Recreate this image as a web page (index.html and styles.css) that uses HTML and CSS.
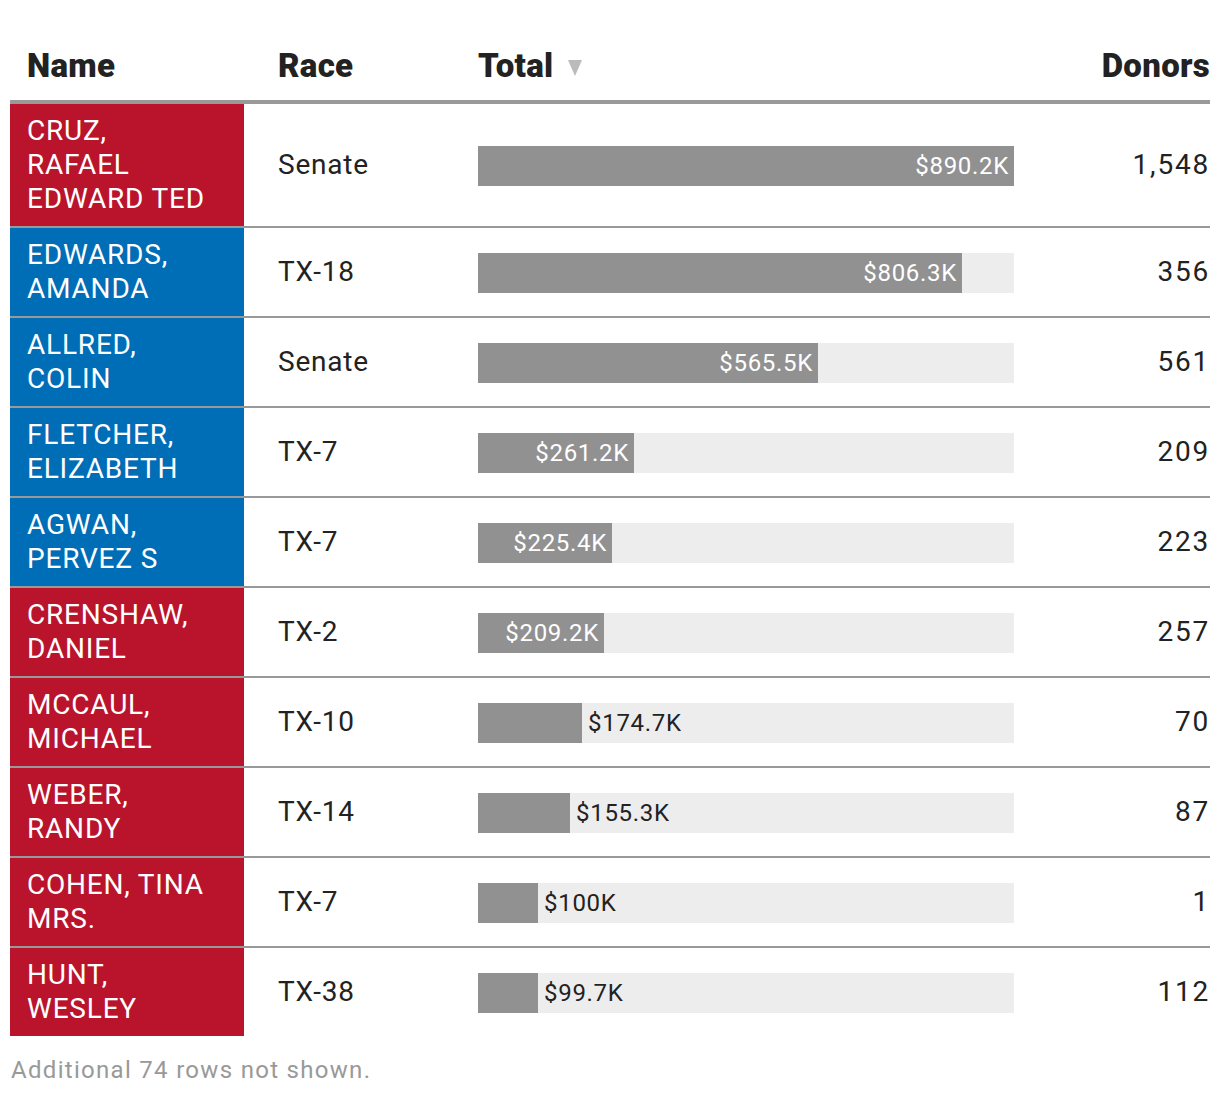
FILE: index.html
```html
<!DOCTYPE html>
<html>
<head>
<meta charset="utf-8">
<link rel="stylesheet" href="styles.css">
</head>
<body>
<div class="wrap">
  <table class="tbl">
    <thead>
      <tr>
        <th class="c-name">Name</th>
        <th class="c-race">Race</th>
        <th class="c-total">Total <span class="sort"></span></th>
        <th class="c-donors">Donors</th>
      </tr>
    </thead>
    <tbody>
      <tr>
        <td class="c-name rep">CRUZ,<br>RAFAEL<br>EDWARD TED</td>
        <td class="c-race">Senate</td>
        <td class="c-total"><div class="track"><div class="fill" style="width:536px"><span class="lab in">$890.2K</span></div></div></td>
        <td class="c-donors">1,548</td>
      </tr>
      <tr>
        <td class="c-name dem">EDWARDS,<br>AMANDA</td>
        <td class="c-race">TX-18</td>
        <td class="c-total"><div class="track"><div class="fill" style="width:484px"><span class="lab in">$806.3K</span></div></div></td>
        <td class="c-donors">356</td>
      </tr>
      <tr>
        <td class="c-name dem">ALLRED,<br>COLIN</td>
        <td class="c-race">Senate</td>
        <td class="c-total"><div class="track"><div class="fill" style="width:340px"><span class="lab in">$565.5K</span></div></div></td>
        <td class="c-donors">561</td>
      </tr>
      <tr>
        <td class="c-name dem">FLETCHER,<br>ELIZABETH</td>
        <td class="c-race">TX-7</td>
        <td class="c-total"><div class="track"><div class="fill" style="width:156px"><span class="lab in">$261.2K</span></div></div></td>
        <td class="c-donors">209</td>
      </tr>
      <tr>
        <td class="c-name dem">AGWAN,<br>PERVEZ S</td>
        <td class="c-race">TX-7</td>
        <td class="c-total"><div class="track"><div class="fill" style="width:134px"><span class="lab in">$225.4K</span></div></div></td>
        <td class="c-donors">223</td>
      </tr>
      <tr>
        <td class="c-name rep">CRENSHAW,<br>DANIEL</td>
        <td class="c-race">TX-2</td>
        <td class="c-total"><div class="track"><div class="fill" style="width:126px"><span class="lab in">$209.2K</span></div></div></td>
        <td class="c-donors">257</td>
      </tr>
      <tr>
        <td class="c-name rep">MCCAUL,<br>MICHAEL</td>
        <td class="c-race">TX-10</td>
        <td class="c-total"><div class="track"><div class="fill" style="width:104px"></div><span class="lab out">$174.7K</span></div></td>
        <td class="c-donors">70</td>
      </tr>
      <tr>
        <td class="c-name rep">WEBER,<br>RANDY</td>
        <td class="c-race">TX-14</td>
        <td class="c-total"><div class="track"><div class="fill" style="width:92px"></div><span class="lab out">$155.3K</span></div></td>
        <td class="c-donors">87</td>
      </tr>
      <tr>
        <td class="c-name rep">COHEN, TINA<br>MRS.</td>
        <td class="c-race">TX-7</td>
        <td class="c-total"><div class="track"><div class="fill" style="width:60px"></div><span class="lab out">$100K</span></div></td>
        <td class="c-donors">1</td>
      </tr>
      <tr>
        <td class="c-name rep">HUNT,<br>WESLEY</td>
        <td class="c-race">TX-38</td>
        <td class="c-total"><div class="track"><div class="fill" style="width:60px"></div><span class="lab out">$99.7K</span></div></td>
        <td class="c-donors">112</td>
      </tr>
    </tbody>
  </table>
  <div class="note">Additional 74 rows not shown.</div>
</div>
</body>
</html>
```

FILE: styles.css
```css
html, body {
  margin: 0;
  padding: 0;
  background: #fff;
}
body {
  font-family: Roboto, "Liberation Sans", sans-serif;
  color: #222;
}
.wrap {
  padding: 0 10px;
  width: 1200px;
}
.tbl {
  width: 1200px;
  border-collapse: collapse;
  table-layout: fixed;
}
.tbl th {
  font-size: 33px;
  font-weight: 900;
  line-height: 34px;
  text-align: left;
  padding: 49px 0 17px 0;
  border-bottom: 4px solid #999;
  color: #222;
  letter-spacing: 0.3px;
}
.tbl th.c-name { padding-left: 17px; width: 217px; }
.tbl th.c-race { padding-left: 34px; width: 200px; }
.tbl th.c-total { width: 536px; }
.tbl th.c-donors { text-align: right; }
.sort {
  display: inline-block;
  width: 0;
  height: 0;
  margin-left: 6px;
  border-left: 7px solid transparent;
  border-right: 7px solid transparent;
  border-top: 16px solid #bbb;
  vertical-align: 1px;
}
.tbl td {
  font-size: 28px;
  line-height: 34px;
  padding: 10px 0;
  border-bottom: 2px solid #999;
  vertical-align: middle;
  letter-spacing: 0.8px;
}
.tbl tbody tr:last-child td { border-bottom: 0; }
.tbl td.c-name {
  color: #fff;
  padding-left: 17px;
}
.tbl td.c-race { padding-left: 34px; }
.rep { background: #b9142c; }
.dem { background: #006db7; }
.tbl td.c-donors { text-align: right; letter-spacing: 1.8px; }
.track {
  position: relative;
  width: 536px;
  height: 40px;
  margin-top: 2px;
  background: #ededed;
  display: flex;
  align-items: center;
}
.fill {
  height: 40px;
  background: #919191;
  display: flex;
  align-items: center;
  justify-content: flex-end;
  flex: none;
}
.lab {
  font-size: 24px;
  line-height: 40px;
  letter-spacing: 0.7px;
}
.lab.in { color: #fff; padding-right: 5px; }
.lab.out { color: #222; padding-left: 6px; }
.note {
  margin-top: 20px;
  padding-left: 1px;
  font-size: 24px;
  line-height: 28px;
  color: #999;
  letter-spacing: 1.3px;
}
```
